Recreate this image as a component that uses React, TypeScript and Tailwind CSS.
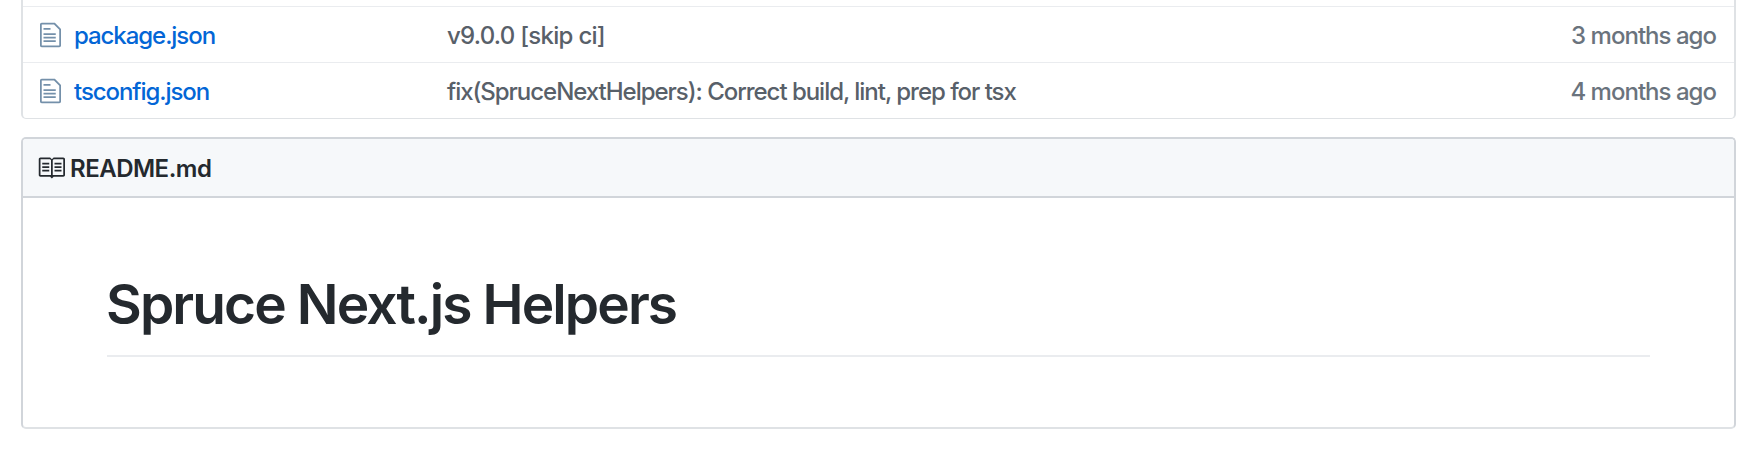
import { clsx } from "clsx";

type FileEntry = { name: string; message: string; age: string; short?: boolean };

const files: FileEntry[] = [
  { name: "package.json", message: "v9.0.0 [skip ci]", age: "3 months ago", short: true },
  {
    name: "tsconfig.json",
    message: "fix(SpruceNextHelpers): Correct build, lint, prep for tsx",
    age: "4 months ago",
  },
];

function FileIcon() {
  return (
    <svg viewBox="0 0 12 16" className="mt-px h-7 w-[21px] shrink-0 fill-[#7490aa]" aria-hidden="true">
      <path d="M6 5H2V4h4v1zM2 8h7V7H2v1zm0 2h7V9H2v1zm0 2h7v-1H2v1zm10-7.5V14c0 .55-.45 1-1 1H1c-.55 0-1-.45-1-1V2c0-.55.45-1 1-1h7.5L12 4.5zM11 5L8 2H1v12h10V5z" />
    </svg>
  );
}

function BookIcon() {
  return (
    <svg viewBox="0 0 16 16" className="mt-px size-7 shrink-0 fill-[#24292e]" aria-hidden="true">
      <path d="M3 5h4v1H3V5zm0 3h4V7H3v1zm0 2h4V9H3v1zm11-5h-4v1h4V5zm0 2h-4v1h4V7zm0 2h-4v1h4V9zm2-6v9c0 .55-.45 1-1 1H9.5l-1 1-1-1H2c-.55 0-1-.45-1-1V3c0-.55.45-1 1-1h5.5l1 1 1-1H15c.55 0 1 .45 1 1zm-8 .5L7.5 3H2v9h6V3.5zm7-.5H9.5l-.5.5V12h6V3z" />
    </svg>
  );
}

function FileRow({ name, message, age, short }: FileEntry) {
  return (
    <div className="flex h-14 items-center border-t border-[#eaecef] pr-[18px] pl-[17px] font-[450]">
      <FileIcon />
      <a className="ml-[13px] w-[373px] shrink-0 pt-0.5 tracking-[-1.06px] text-[#0366d6]">{name}</a>
      <span className={clsx("grow pt-0.5 text-[#586069]", short ? "tracking-[-0.72px]" : "tracking-[-1.03px]")}>
        {message}
      </span>
      <span className="pt-0.5 tracking-[-0.98px] text-[#6a737d]">{age}</span>
    </div>
  );
}

export default function App() {
  return (
    <div className="h-[468px] overflow-hidden bg-white pr-[17px] pl-[21px] font-['Inter',sans-serif] text-2xl leading-9 whitespace-nowrap">
      <div className="rounded-b-[5px] border-x-2 border-b border-[#dfe2e5] pt-1.5">
        {files.map((file) => (
          <FileRow key={file.name} {...file} />
        ))}
      </div>
      <section className="mt-[18px] h-[292px] overflow-hidden rounded-[5px] border-2 border-[#d1d5da] border-b-[#dfe2e5]">
        <h3 className="flex h-[59px] items-center gap-[5px] border-b-2 border-[#d1d5da] bg-[#f6f8fa] pl-3.5 font-semibold tracking-[-0.5px] text-[#24292e]">
          <BookIcon />
          <span className="pt-0.5">README.md</span>
        </h3>
        <div className="px-[84px] pt-[71px]">
          <h1 className="h-[88px] border-b-2 border-[#eaecef] text-[55px] leading-[70px] font-semibold tracking-[-1.88px] text-[#24292e]">
            <span className="-ml-px">Spruce Next.js Helpers</span>
          </h1>
        </div>
      </section>
    </div>
  );
}
